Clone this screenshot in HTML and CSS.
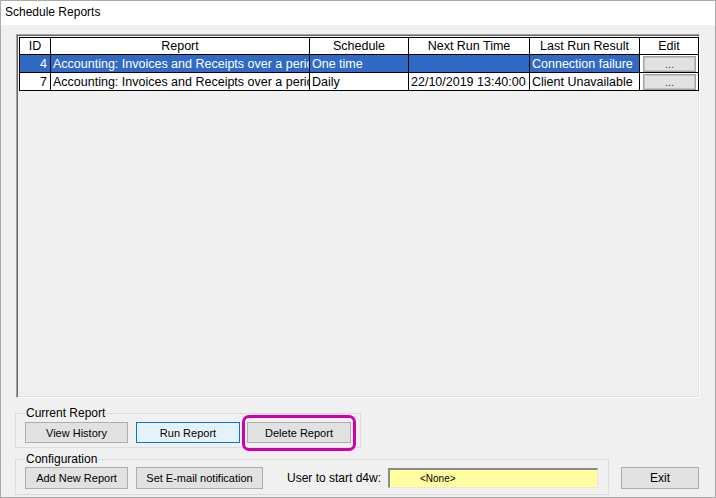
FILE: index.html
```html
<!DOCTYPE html>
<html>
<head>
<meta charset="utf-8">
<title>Schedule Reports</title>
<link rel="stylesheet" href="styles.css">
</head>
<body>
<div class="window">
  <div class="titlebar">Schedule Reports</div>
  <div class="client">
    <div class="listframe">
      <table class="grid">
        <colgroup>
          <col class="c-id"><col class="c-report"><col class="c-sched"><col class="c-next"><col class="c-last"><col class="c-edit">
        </colgroup>
        <thead>
          <tr><th>ID</th><th>Report</th><th>Schedule</th><th>Next Run Time</th><th>Last Run Result</th><th>Edit</th></tr>
        </thead>
        <tbody>
          <tr class="selected">
            <td class="num">4</td>
            <td class="clip">Accounting: Invoices and Receipts over a period</td>
            <td>One time</td>
            <td></td>
            <td>Connection failure</td>
            <td class="editcell"><span class="editbtn">...</span></td>
          </tr>
          <tr>
            <td class="num">7</td>
            <td class="clip">Accounting: Invoices and Receipts over a period</td>
            <td>Daily</td>
            <td>22/10/2019 13:40:00</td>
            <td>Client Unavailable</td>
            <td class="editcell"><span class="editbtn">...</span></td>
          </tr>
        </tbody>
      </table>
    </div>

    <fieldset class="group group-current">
      <legend>Current Report</legend>
      <div class="btnrow">
        <button class="btn w103">View History</button>
        <button class="btn btn-focus w104">Run Report</button>
        <span class="highlight-wrap"><button class="btn w104">Delete Report</button></span>
      </div>
    </fieldset>

    <div class="bottomrow">
      <fieldset class="group group-config">
        <legend>Configuration</legend>
        <div class="btnrow">
          <button class="btn w103">Add New Report</button>
          <button class="btn w127">Set E-mail notification</button>
          <span class="userlabel">User to start d4w:</span>
          <div class="userbox">&lt;None&gt;</div>
        </div>
      </fieldset>
      <button class="btn exit">Exit</button>
    </div>
  </div>
</div>
</body>
</html>
```

FILE: styles.css
```css
html, body {
  margin: 0;
  padding: 0;
}
body {
  width: 716px;
  height: 498px;
  overflow: hidden;
  font-family: "Liberation Sans", Arial, sans-serif;
  color: #000;
}
.window {
  box-sizing: border-box;
  width: 716px;
  height: 498px;
  border: 1px solid #aaaaaa;
  display: flex;
  flex-direction: column;
  background: #f0f0f0;
}
.titlebar {
  height: 24px;
  line-height: 23px;
  background: #fff;
  padding-left: 4px;
  font-size: 12px;
  font-family: "Liberation Sans", Arial, sans-serif;
}
.client {
  flex: 1;
  background: #f0f0f0;
  padding: 9px 0 0 14px;
  display: flex;
  flex-direction: column;
}
.listframe {
  box-sizing: border-box;
  margin-left: 1px;
  width: 684px;
  height: 364px;
  border-style: solid;
  border-width: 1px;
  border-color: #a0a0a0 #ffffff #ffffff #a0a0a0;
  box-shadow: inset 1px 1px 0 #696969, inset -1px -1px 0 #e3e3e3;
  padding: 2px 0 0 2px;
}
.grid {
  border-collapse: collapse;
  table-layout: fixed;
  width: 680px;
  font-size: 12.5px;
  border: 1px solid #000;
}
.c-id { width: 31px; }
.c-report { width: 259px; }
.c-sched { width: 99px; }
.c-next { width: 121px; }
.c-last { width: 110px; }
.c-edit { width: 59px; }
.grid th, .grid td {
  border: 1px solid #000;
  padding: 0 2px;
  white-space: nowrap;
  overflow: hidden;
  text-overflow: clip;
  line-height: 14px;
}
.grid th {
  height: 16px;
  font-weight: normal;
  background: #fff;
  text-align: center;
}
.grid td {
  height: 17px;
  background: #fff;
  text-align: left;
}
.grid td.num {
  text-align: right;
  padding-right: 3px;
}
.grid tr.selected td {
  background: #316ac5;
  color: #fff;
}
.grid tr.selected td.editcell,
.grid td.editcell {
  background: #fff;
  padding: 0 1px 0 3px;
  vertical-align: middle;
}
.editbtn {
  display: flex;
  align-items: flex-end;
  justify-content: center;
  box-sizing: border-box;
  width: 53px;
  height: 16px;
  background: #e1e1e1;
  border: 1px solid #a0a0a0;
  box-shadow: inset 0 0 0 1px #c4c4c4;
  color: #1e3f78;
  font-size: 11px;
  line-height: 11px;
  padding-bottom: 1px;
}

.group {
  box-sizing: border-box;
  margin: 0;
  border: 1px solid #dcdcdc;
  padding: 0 8px 4px 9px;
}
.group legend {
  font-size: 12px;
  line-height: 14px;
  padding: 0 1px;
  margin-left: 0;
}
.group-current {
  width: 346px;
  margin-top: 8px;
  padding-top: 2px;
}
.btnrow {
  display: flex;
  align-items: center;
}
.btn {
  box-sizing: border-box;
  height: 21px;
  margin: 0 8px 0 0;
  padding: 0;
  background: #e1e1e1;
  border: 1px solid #adadad;
  font-family: "Liberation Sans", Arial, sans-serif;
  font-size: 11px;
  color: #000;
}
.btn-focus {
  background: #e5f1fb;
  border-color: #0078d7;
  margin-right: 7px;
}
.w103 { width: 103px; }
.w104 { width: 104px; }
.w127 { width: 127px; }
.highlight-wrap {
  position: relative;
  display: inline-flex;
}
.highlight-wrap .btn { margin: 0; }
.highlight-wrap::after {
  content: "";
  position: absolute;
  left: -5px;
  right: -5px;
  top: -7px;
  bottom: -8px;
  border: 3px solid #d000b0;
  border-radius: 7px;
}
.bottomrow {
  display: flex;
  align-items: flex-end;
  margin-top: 4px;
}
.group-config {
  width: 594px;
  padding-top: 1px;
  padding-bottom: 5px;
  padding-right: 10px;
}
.group-config .btn {
  height: 22px;
}
.userlabel {
  font-size: 12px;
  margin-left: 16px;
  margin-right: 4px;
  white-space: nowrap;
}
.userbox {
  box-sizing: border-box;
  width: 210px;
  height: 20px;
  margin-left: auto;
  background: #ffff9f;
  border-style: solid;
  border-width: 2px 1px 1px 2px;
  border-color: #8a8a8a #e6e6e6 #e6e6e6 #8a8a8a;
  font-size: 10px;
  line-height: 17px;
  padding-left: 30px;
}
.exit {
  width: 78px;
  height: 22px;
  margin: 0 0 6px 12px;
  font-size: 12px;
}
```
